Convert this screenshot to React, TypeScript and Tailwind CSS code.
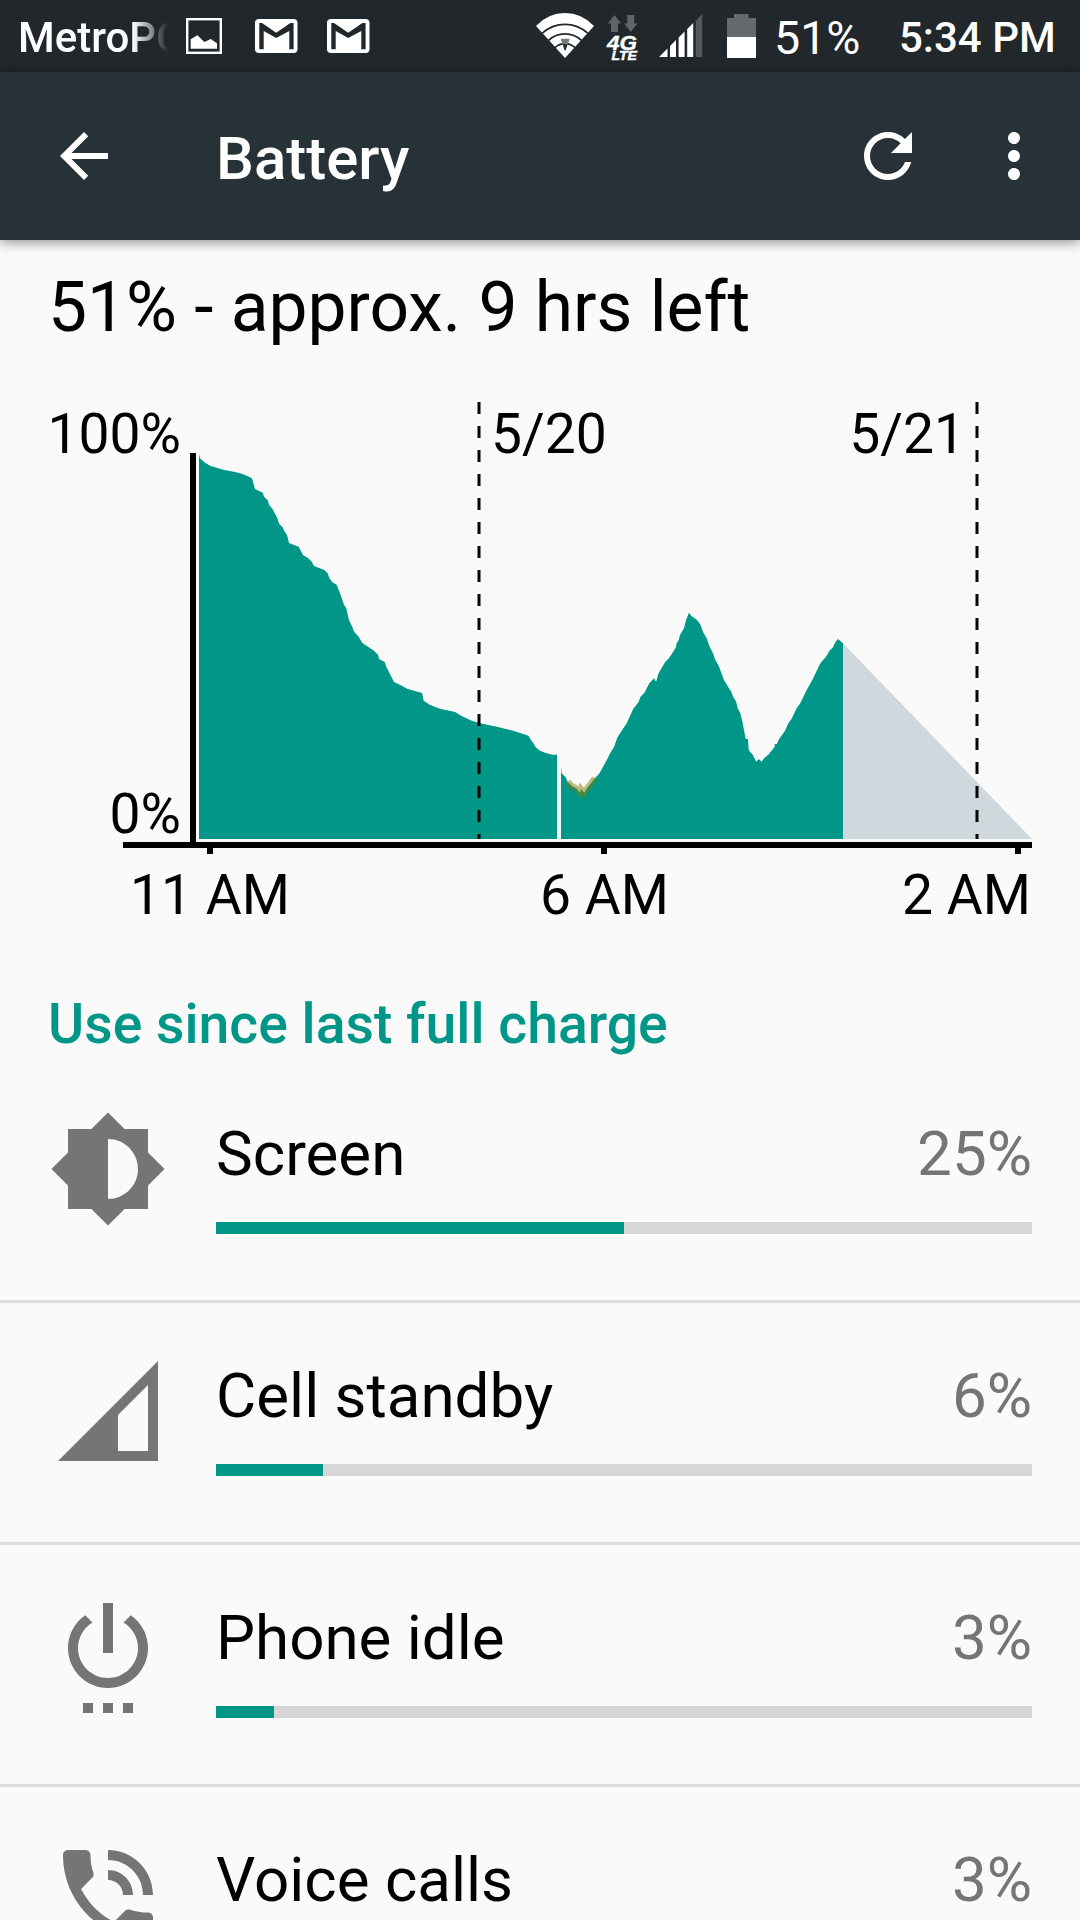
import type { ReactNode } from 'react'

type Usage = {
  name: string
  percent: string
  fill: number
  icon: ReactNode
}

const usage: Usage[] = [
  {
    name: 'Screen',
    percent: '25%',
    fill: 408,
    icon: (
      <path d="M20 15.31L23.31 12 20 8.69V4h-4.69L12 .69 8.69 4H4v4.69L.69 12 4 15.31V20h4.69L12 23.31 15.31 20H20v-4.69zM12 18V6c3.31 0 6 2.69 6 6s-2.69 6-6 6z" />
    ),
  },
  {
    name: 'Cell standby',
    percent: '6%',
    fill: 107,
    icon: <path fillRule="evenodd" d="M2 22h20V2zM14 20v-7.2l6-6V20z" />,
  },
  {
    name: 'Phone idle',
    percent: '3%',
    fill: 58,
    icon: (
      <path d="M7 24h2v-2H7v2zm4 0h2v-2h-2v2zm2-22h-2v10h2V2zm3.56 2.44l-1.45 1.45C16.84 6.94 18 8.83 18 11c0 3.31-2.69 6-6 6s-6-2.69-6-6c0-2.17 1.16-4.06 2.88-5.12L7.44 4.44C5.36 5.88 4 8.28 4 11c0 4.42 3.58 8 8 8s8-3.58 8-8c0-2.72-1.36-5.12-3.44-6.56zM15 24h2v-2h-2v2z" />
    ),
  },
  {
    name: 'Voice calls',
    percent: '3%',
    fill: 54,
    icon: (
      <path d="M20 15.5c-1.25 0-2.45-.2-3.57-.57-.35-.11-.74-.03-1.02.24l-2.2 2.2c-2.83-1.44-5.15-3.75-6.59-6.59l2.2-2.21c.28-.26.36-.65.25-1C8.7 6.45 8.5 5.25 8.5 4c0-.55-.45-1-1-1H4c-.55 0-1 .45-1 1 0 9.39 7.61 17 17 17 .55 0 1-.45 1-1v-3.5c0-.55-.45-1-1-1zM19 12h2c0-4.97-4.03-9-9-9v2c3.87 0 7 3.13 7 7zm-4 0h2c0-2.76-2.24-5-5-5v2c1.66 0 3 1.34 3 3z" />
    ),
  },
]

// battery level before and after the phone was off, in chart pixels
const levelBefore =
  '199,54 200,58.3 205,62.7 210.7,66 223.3,69.7 235,72 242.7,74 251.7,78 252.7,80.7 255,89 262.7,92.7 264,96.7 267.7,100.3 269,104.7 272.3,108.7 276.7,116.7 279.3,124 282.7,127.3 284.3,131 287,135 289,143 298.7,146.7 303,155 308.3,158.3 311.7,161.7 314,166 324.3,170 327.7,173.3 329.3,178 332.3,182.3 336.7,184.7 341.3,196.7 344,205 346.3,208.3 349,220.3 352.7,227.7 354,231.7 358.7,236.7 362.3,243 373.3,250.3 378,254.7 379,259 384.7,262 386.3,266.7 394,282 401.7,285.7 407.7,289 422,293 423.7,300.7 430,305 440,308.7 455,312 461.7,316 471.7,320.7 480,323.3 496.7,326.7 513.3,330.7 528.5,335.7 531,340 533.3,343 535.7,347.3 540,350.7 545,352.7 552,354.7 557,354.7 557,439 199,439'

const levelAfter =
  '561,367.3 561.7,373.3 565.7,377.3 567.7,382 572,386 576.7,388.7 580,392.7 581,389 584.3,393 586.3,389.3 594.7,378.3 599,374 601.7,369.3 607.3,359 610.7,352.3 614,347 617.3,337.7 621.7,330.7 626.7,323.3 633.3,308.7 638.7,302 640.3,297 644.3,293 649.3,283.3 654.3,278 655,280.7 656.3,281.3 658.3,273.7 665,262.3 669.3,257.7 675.7,247.7 676.7,243.3 678.7,240 680,235 684,228.3 686,220.3 689,212.7 691.7,216.3 697.3,220.3 700.7,225.3 703,232 706.7,238.3 709,245.3 713.3,254 715,259.3 718.7,265.7 724,280.3 731.3,292 733.3,297.3 736,301.3 737.7,308.3 740.3,313.3 742.3,321.3 745.7,339 748,339 748.7,350.3 752.7,354.7 756.3,361.7 758.7,359 761.7,361.7 764,358.3 768.3,354.7 774.7,346.7 774.7,344 776.7,344 779.3,338.7 785,330.7 788.3,323.3 791.7,318.7 796.7,308 800,303.7 806.7,290 812.7,279.3 820.3,263.3 826,256.7 829.3,251 832.7,247.7 835.3,242.3 838,239 843,243.3 843,439 561,439'

function GmailIcon() {
  return (
    <svg className="h-[34px] w-[43px]" viewBox="0 0 43 34">
      <rect x="0" y="0" width="42.5" height="34" rx="4" fill="#fff" />
      <path
        d="M4.3 4H7l14.2 9.7L35.4 4h3.2v26.2h-4.3V12L21.2 19 8.7 12v18.2H4.3z"
        fill="#21272b"
      />
    </svg>
  )
}

function StatusBar() {
  return (
    <header className="flex h-[72px] items-start bg-[#21272b] pr-[14px] text-white">
      <div className="ml-[18px] w-[150px] overflow-hidden pt-[2px] text-[42px] leading-[72px] font-medium whitespace-nowrap [mask-image:linear-gradient(to_right,#000_115px,transparent_150px)]">
        MetroPCS
      </div>
      <svg className="mt-[18px] ml-[18px] h-9 w-9" viewBox="0 0 36 36">
        <rect x="1.2" y="1.2" width="33.6" height="33.6" fill="none" stroke="#fff" strokeWidth="2.4" />
        <path d="M4.7 21.3l6.7-4 7 6.7 6.3-3 6.3 4.3v5.4H4.7z" fill="#fff" />
      </svg>
      <div className="mt-[19px] ml-[33px] flex gap-[29px]">
        <GmailIcon />
        <GmailIcon />
      </div>

      <svg className="ml-auto h-[72px] w-[226px]" viewBox="534 0 226 72">
        {/* wifi */}
        <path d="M565 58L536 26Q548 13 565 13T594 26z" fill="#fff" />
        <g fill="none" stroke="#21272b" strokeWidth="1.8">
          <path d="M542.3 33.2A33.5 33.5 0 0 1 587.7 33.2" />
          <path d="M548.6 40.3A24 24 0 0 1 581.4 40.3" />
          <path d="M555 47.6A14.5 14.5 0 0 1 575 47.6" />
        </g>
        <path d="M560.7 38.7h9l-2 6h-5z" fill="#77797b" />
        <path d="M562.7 44.2h4.8l-1.8 6h-1.2z" fill="#21272b" />
        {/* data activity */}
        <path
          d="M614.5 15l6.7 8.6H618V32h-7v-8.4h-3.2zM627.2 15h7v8.6h3.2L630.8 32l-6.7-8.4h3.1z"
          fill="#5f6467"
        />
        <g fill="#fff" stroke="#fff" strokeWidth="0.4" fontFamily="Liberation Sans, sans-serif" fontWeight="700" fontStyle="italic">
          <text x="607" y="50" fontSize="20.5" textLength="30" lengthAdjust="spacingAndGlyphs">4G</text>
          <text x="611.5" y="60" fontSize="12.6" textLength="25.5" lengthAdjust="spacingAndGlyphs">LTE</text>
        </g>
        {/* signal */}
        <path
          d="M659 57l8.5-8.5V57zM670 46l6-6v17h-6zM678.6 37.4l6-6V57h-6zM687.2 29l6-6v34h-6z"
          fill="#fff"
        />
        <path d="M695.8 20.5l6.4-6.4V57h-6.4z" fill="#54595c" />
        {/* battery */}
        <path d="M734 14h14.5v4h7.5v19h-29V18h7z" fill="#65696c" />
        <path d="M727 37h29v21h-29z" fill="#fff" />
      </svg>
      <div className="w-[124px] pt-[2px] pl-[14px] text-[46.5px] leading-[72px]">51%</div>
      <div className="w-[182px] pt-[2px] pl-[15px] text-[42px] leading-[72px] font-medium whitespace-nowrap">5:34 PM</div>
    </header>
  )
}

function AppBar() {
  return (
    <div className="relative flex h-[168px] items-center bg-[#263238] pr-[30px] pl-12 text-white shadow-[0_2px_12px_rgba(0,0,0,0.45)]">
      <svg className="h-[72px] w-[72px]" viewBox="0 0 24 24" fill="currentColor">
        <path d="M20 11H7.83l5.59-5.59L12 4l-8 8 8 8 1.41-1.41L7.83 13H20v-2z" />
      </svg>
      <h1 className="ml-24 flex-1 pt-[5px] text-[60px] leading-[72px] font-medium">Battery</h1>
      <svg className="mr-[54px] h-[72px] w-[72px]" viewBox="0 0 24 24" fill="currentColor">
        <path d="M17.65 6.35C16.2 4.9 14.21 4 12 4c-4.42 0-7.99 3.58-7.99 8s3.57 8 7.99 8c3.73 0 6.84-2.55 7.73-6h-2.08c-.82 2.33-3.04 4-5.65 4-3.31 0-6-2.69-6-6s2.69-6 6-6c1.66 0 3.14.69 4.22 1.78L13 11h7V4l-2.35 2.35z" />
      </svg>
      <svg className="h-[72px] w-[72px]" viewBox="0 0 24 24" fill="currentColor">
        <path d="M12 8c1.1 0 2-.9 2-2s-.9-2-2-2-2 .9-2 2 .9 2 2 2zm0 2c-1.1 0-2 .9-2 2s.9 2 2 2 2-.9 2-2-.9-2-2-2zm0 6c-1.1 0-2 .9-2 2s.9 2 2 2 2-.9 2-2-.9-2-2-2z" />
      </svg>
    </div>
  )
}

function HistoryChart() {
  return (
    <svg className="mt-14 block h-[530px] w-[1080px]" viewBox="0 0 1080 530">
      <polygon points={levelBefore} fill="#009688" />
      <polygon points={levelAfter} fill="#009688" />
      <path d="M843 243.3L1032 439H843z" fill="#cfd8dc" />
      <polyline
        points="567.7,382 572,386 576.7,388.7 580,392.7 581,389 584.3,393 586.3,389.3 594.7,378.3"
        fill="none"
        stroke="#7f7c00"
        strokeOpacity="0.5"
        strokeWidth="6"
      />
      <g stroke="#000" strokeWidth="3" strokeDasharray="12 12">
        <path d="M479 2V439" />
        <path d="M977 2V439" />
      </g>
      <path
        d="M190 53h6v389h836v6h-11v6h-6v-6H607v6h-6v-6H213v6h-6v-6h-84v-6h67z"
        fill="#000"
      />
      <g fontSize="55.2" fill="#000">
        <text x="181" y="53" textAnchor="end">100%</text>
        <text x="181" y="433" textAnchor="end">0%</text>
        <text x="491" y="53">5/20</text>
        <text x="965" y="53" textAnchor="end">5/21</text>
        <text x="210" y="514" textAnchor="middle">11 AM</text>
        <text x="604.5" y="514" textAnchor="middle">6 AM</text>
        <text x="1031" y="514" textAnchor="end">2 AM</text>
      </g>
    </svg>
  )
}

function UsageRow({ name, percent, fill, icon }: Usage) {
  return (
    <li className="flex h-[242px] border-b-[3px] border-[#dcdcdc] px-12 pt-12">
      <svg className="h-[120px] w-[120px] shrink-0" viewBox="0 0 24 24" fill="#757575">
        {icon}
      </svg>
      <div className="ml-12 flex-1 pt-[9px]">
        <div className="flex justify-between text-[61.9px] leading-[72px]">
          <span>{name}</span>
          <span className="text-[#757575]">{percent}</span>
        </div>
        <div className="mt-8 h-3 bg-[#d7d7d7]">
          <div className="h-full bg-[#009688]" style={{ width: fill }} />
        </div>
      </div>
    </li>
  )
}

export default function App() {
  return (
    <div className="h-[1920px] w-[1080px] overflow-hidden bg-[#fafafa] font-['Roboto',sans-serif] text-black">
      <StatusBar />
      <AppBar />
      <main>
        <h2 className="pt-8 pl-12 text-[69.5px] leading-[72px]">51% - approx. 9 hrs left</h2>
        <HistoryChart />
        <h3 className="mt-[59px] pl-12 text-[55.3px] leading-[72px] font-medium text-[#009688]">
          Use since last full charge
        </h3>
        <ul>
          {usage.map((u) => (
            <UsageRow key={u.name} {...u} />
          ))}
        </ul>
      </main>
    </div>
  )
}
